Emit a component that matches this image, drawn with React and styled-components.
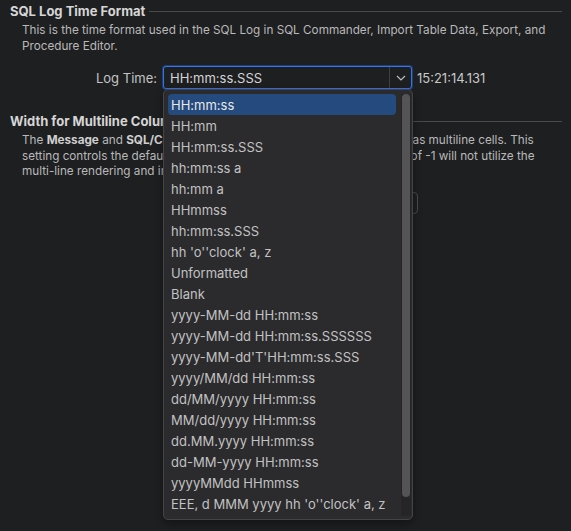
import React from "react";
import styled, { createGlobalStyle } from "styled-components";

const Global = createGlobalStyle`
  html, body { margin: 0; padding: 0; background: #1e1f21; }
  body { font-family: Inter, "Noto Sans", sans-serif; color: #c9c9c9; width: 571px; height: 531px; overflow: hidden; }
`;

const Page = styled.div`
  padding: 3px 9px 0 10px;
  display: flex;
  flex-direction: column;
`;

const Section = styled.section`
  display: flex;
  flex-direction: column;
  margin-bottom: ${(p) => p.$gap || 0}px;
`;

const Header = styled.div`
  display: flex;
  align-items: center;
  gap: 4px;
  height: 16px;
`;

const Title = styled.span`
  font-size: 13px;
  font-weight: 700;
  color: #d6d6d6;
  white-space: nowrap;
`;

const Rule = styled.div`
  flex: 1;
  height: 1px;
  background: #4a4a4a;
  margin-top: 1px;
`;

const Desc = styled.p`
  margin: 4px 0 0 12px;
  font-size: 11.72px;
  line-height: 15.5px;
  color: #b9b9b9;
  white-space: pre;
  b { font-weight: 700; color: #cfcfcf; }
`;

const FormRow = styled.div`
  display: flex;
  align-items: center;
  margin-top: ${(p) => p.$top || 0}px;
`;

const Label = styled.span`
  width: 147px;
  text-align: right;
  padding-right: 6px;
  font-size: 13px;
  color: #c4c4c4;
`;

const Combo = styled.div`
  width: 249px;
  height: 23px;
  box-sizing: border-box;
  border: 1px solid #3574f0;
  border-radius: 3px;
  background: #1e1f21;
  display: flex;
  align-items: stretch;
  box-shadow: 0 0 0 1px #233d6e;
`;

const ComboText = styled.span`
  flex: 1;
  font-size: 13px;
  color: #d4d4d4;
  padding-left: 6px;
  display: flex;
  align-items: center;
`;

const ArrowBox = styled.span`
  width: 21px;
  border-left: 1px solid #3f3f3f;
  display: flex;
  align-items: center;
  justify-content: center;
`;

const TimeText = styled.span`
  font-size: 13px;
  color: #c8c8c8;
  margin-left: 5px;
`;

const Field = styled.div`
  width: 255px;
  height: 22px;
  box-sizing: border-box;
  border: 1px solid #4a4a4a;
  border-radius: 4px;
  margin-left: 153px;
  background: #1e1f21;
`;

const Popup = styled.div`
  position: absolute;
  left: 163px;
  top: 89px;
  width: 250px;
  height: 431px;
  box-sizing: border-box;
  background: #2b2b2d;
  border: 1px solid #444446;
  border-radius: 5px;
  display: flex;
  padding: 4px 1px 3px 4px;
  box-shadow: 0 3px 8px rgba(0,0,0,0.4);
`;

const List = styled.ul`
  list-style: none;
  margin: 0;
  padding: 0;
  flex: 1;
  display: flex;
  flex-direction: column;
  margin-right: 5px;
`;

const Item = styled.li`
  height: 21px;
  display: flex;
  align-items: center;
  padding-left: 3px;
  font-size: 13px;
  color: ${(p) => (p.$selected ? "#e8e8e8" : "#c2c2c2")};
  background: ${(p) => (p.$selected ? "#244a7e" : "transparent")};
  border-radius: 4px;
  white-space: nowrap;
`;

const Track = styled.div`
  width: 10px;
  background: #252527;
  border-radius: 0 3px 3px 0;
  display: flex;
  flex-direction: column;
  padding: 0 1px;
  box-sizing: border-box;
`;

const Thumb = styled.div`
  height: 403px;
  background: #545456;
  border-radius: 4px;
`;

const items = [
  "HH:mm:ss",
  "HH:mm",
  "HH:mm:ss.SSS",
  "hh:mm:ss a",
  "hh:mm a",
  "HHmmss",
  "hh:mm:ss.SSS",
  "hh 'o''clock' a, z",
  "Unformatted",
  "Blank",
  "yyyy-MM-dd HH:mm:ss",
  "yyyy-MM-dd HH:mm:ss.SSSSSS",
  "yyyy-MM-dd'T'HH:mm:ss.SSS",
  "yyyy/MM/dd HH:mm:ss",
  "dd/MM/yyyy HH:mm:ss",
  "MM/dd/yyyy HH:mm:ss",
  "dd.MM.yyyy HH:mm:ss",
  "dd-MM-yyyy HH:mm:ss",
  "yyyyMMdd HHmmss",
  "EEE, d MMM yyyy hh 'o''clock' a, z",
];

export default function App() {
  return (
    <>
      <Global />
      <Page>
        <Section $gap={24}>
          <Header>
            <Title>SQL Log Time Format</Title>
            <Rule />
          </Header>
          <Desc>
            {"This is the time format used in the SQL Log in SQL Commander, Import Table Data, Export, and\nProcedure Editor."}
          </Desc>
          <FormRow $top={12}>
            <Label>Log Time:</Label>
            <Combo>
              <ComboText>HH:mm:ss.SSS</ComboText>
              <ArrowBox>
                <svg width="10" height="6" viewBox="0 0 10 6">
                  <path d="M1 1 L5 5 L9 1" fill="none" stroke="#bdbdbd" strokeWidth="1.2" />
                </svg>
              </ArrowBox>
            </Combo>
            <TimeText>15:21:14.131</TimeText>
          </FormRow>
        </Section>
        <Section>
          <Header>
            <Title>Width for Multiline Columns</Title>
            <Rule />
          </Header>
          <Desc>
            <>The <b>Message</b> and <b>SQL/Command</b> columns in the SQL log are painted as multiline cells. This{"\n"}setting controls the default width (in pixels) of these columns. A value of -1 will not utilize the{"\n"}multi-line rendering and instead show a single line.</>
          </Desc>
          <FormRow $top={12}>
            <Field />
          </FormRow>
        </Section>
      </Page>
      <Popup>
        <List>
          {items.map((t, i) => (
            <Item key={t} $selected={i === 0}>{t}</Item>
          ))}
        </List>
        <Track>
          <Thumb />
        </Track>
      </Popup>
    </>
  );
}
